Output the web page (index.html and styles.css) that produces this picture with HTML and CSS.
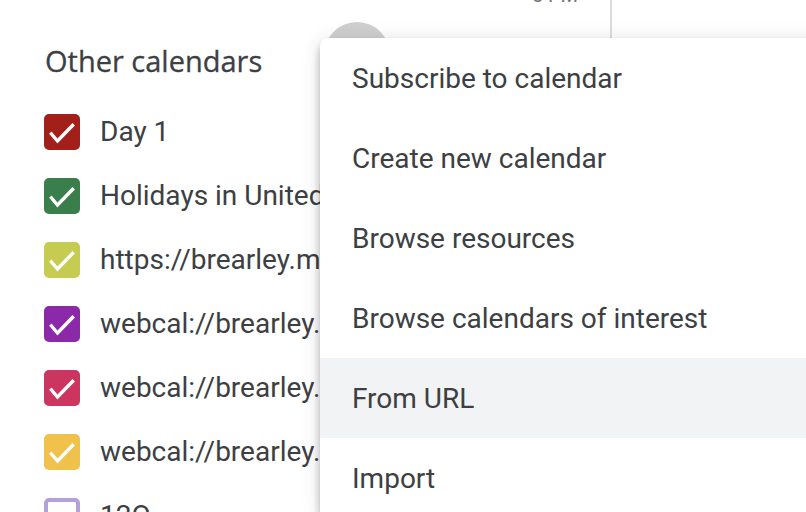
FILE: index.html
```html
<!DOCTYPE html>
<html>
<head>
<meta charset="utf-8">
<link rel="stylesheet" href="styles.css">
</head>
<body>
<div class="page">
  <aside class="sidebar">
    <h2 class="section-title">Other calendars</h2>
    <ul class="cals">
      <li class="cal"><span class="box c-red"><svg viewBox="0 0 36 36"><polyline points="7.5,20 13.5,27 28.5,11.5"/></svg></span><span class="label">Day 1</span></li>
      <li class="cal"><span class="box c-green"><svg viewBox="0 0 36 36"><polyline points="7.5,20 13.5,27 28.5,11.5"/></svg></span><span class="label">Holidays in United States</span></li>
      <li class="cal"><span class="box c-lime"><svg viewBox="0 0 36 36"><polyline points="7.5,20 13.5,27 28.5,11.5"/></svg></span><span class="label">https://brearley.myschoolapp.com</span></li>
      <li class="cal"><span class="box c-purple"><svg viewBox="0 0 36 36"><polyline points="7.5,20 13.5,27 28.5,11.5"/></svg></span><span class="label">webcal://brearley.myschoolapp.com</span></li>
      <li class="cal"><span class="box c-pink"><svg viewBox="0 0 36 36"><polyline points="7.5,20 13.5,27 28.5,11.5"/></svg></span><span class="label">webcal://brearley.myschoolapp.com</span></li>
      <li class="cal"><span class="box c-yellow"><svg viewBox="0 0 36 36"><polyline points="7.5,20 13.5,27 28.5,11.5"/></svg></span><span class="label">webcal://brearley.myschoolapp.com</span></li>
      <li class="cal"><span class="box c-lavender unchecked"></span><span class="label">12O</span></li>
    </ul>
  </aside>
  <div class="timecol"><span class="time">5 PM</span></div>
  <div class="grid"></div>

  <div class="hover-circle"></div>

  <div class="menu">
    <div class="item">Subscribe to calendar</div>
    <div class="item">Create new calendar</div>
    <div class="item">Browse resources</div>
    <div class="item">Browse calendars of interest</div>
    <div class="item active">From URL</div>
    <div class="item">Import</div>
  </div>
</div>
</body>
</html>
```
FILE: styles.css
```css
* { box-sizing: border-box; }
html, body {
  margin: 0;
  padding: 0;
  background: #fff;
  overflow: hidden;
}
.page {
  position: relative;
  display: flex;
  width: 806px;
  height: 512px;
  overflow: hidden;
  font-family: Roboto, "Liberation Sans", sans-serif;
  color: #3c4043;
}
.sidebar {
  flex: 0 0 520px;
  min-width: 0;
  overflow: hidden;
  padding-left: 44px;
}
.section-title {
  margin: 45px 0 23px 1px;
  font-family: "Open Sans", Roboto, sans-serif;
  font-weight: 500;
  font-size: 29px;
  line-height: 32px;
  height: 32px;
  color: #3c4043;
  letter-spacing: 0;
  -webkit-text-stroke: 0.3px #3c4043;
}
.cals {
  list-style: none;
  margin: 0;
  padding: 0;
}
.cal {
  display: flex;
  align-items: center;
  height: 64px;
  white-space: nowrap;
}
.box {
  flex: 0 0 36px;
  width: 36px;
  height: 36px;
  border-radius: 5px;
  display: flex;
}
.box svg {
  width: 36px;
  height: 36px;
}
.box polyline {
  fill: none;
  stroke: #fff;
  stroke-width: 3.4;
  stroke-linecap: square;
  stroke-linejoin: miter;
}
.c-red { background: #a21f1a; }
.c-green { background: #3a7e4b; }
.c-lime { background: #c5cc51; }
.c-purple { background: #8a2aa8; }
.c-pink { background: #cb355f; }
.c-yellow { background: #f0c14b; }
.unchecked {
  background: #fff;
  border: 4px solid #b4a0dc;
}
.label {
  margin-left: 20px;
  font-size: 28px;
  line-height: 36px;
  color: #3c4043;
}
.timecol {
  flex: 0 0 92px;
  border-right: 2px solid #dadce0;
  text-align: right;
  padding-right: 32px;
}
.time {
  display: block;
  margin-top: -17px;
  font-size: 20px;
  line-height: 24px;
  color: #70757a;
}
.grid {
  flex: 1;
}
.hover-circle {
  position: absolute;
  left: 324px;
  top: 22px;
  width: 66px;
  height: 66px;
  border-radius: 50%;
  background: #cfcfcf;
}
.menu {
  position: absolute;
  left: 320px;
  top: 38px;
  width: 520px;
  background: #fff;
  border-radius: 8px 0 0 8px;
  box-shadow: 0 8px 10px 0 rgba(0,0,0,0.14), 0 2px 20px 0 rgba(0,0,0,0.12), 0 4px 8px -2px rgba(0,0,0,0.2);
}
.item {
  height: 80px;
  display: flex;
  align-items: center;
  padding-left: 32px;
  font-size: 28px;
  color: #3c4043;
  white-space: nowrap;
}
.item.active {
  background: #f1f3f4;
}
```
